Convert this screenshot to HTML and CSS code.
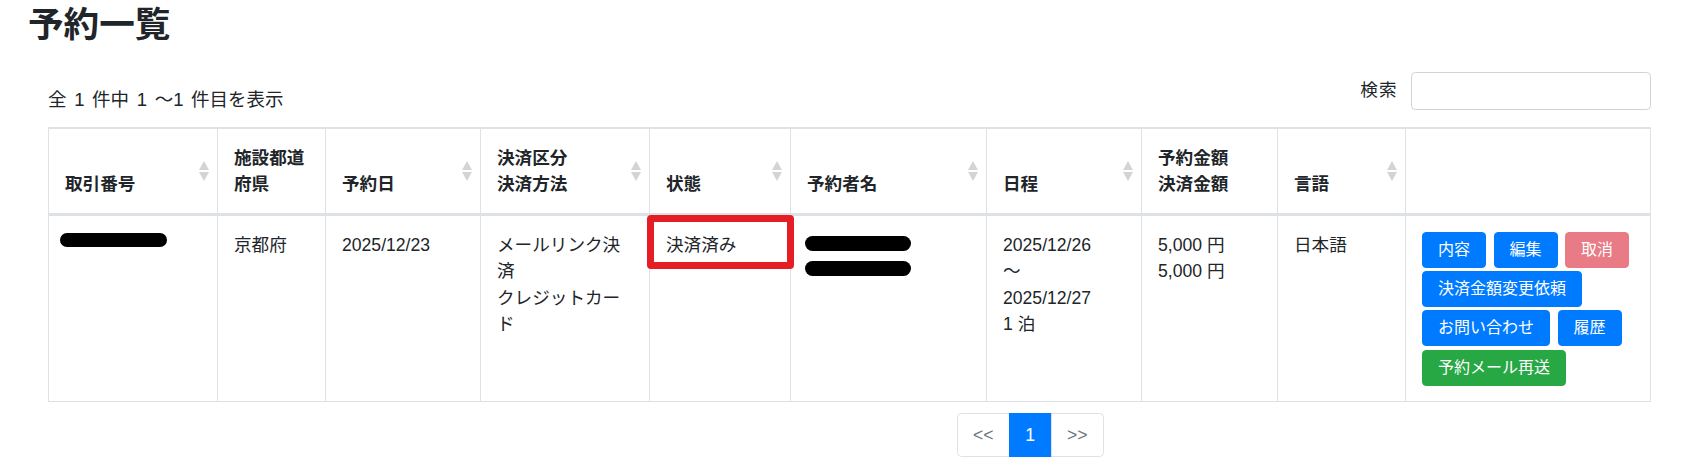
FILE: index.html
```html
<!DOCTYPE html>
<html lang="ja">
<head>
    <meta charset="UTF-8">
    <meta name="viewport" content="width=device-width, initial-scale=1.0">
    <title>予約一覧</title>
    <link rel="stylesheet" href="styles.css">
</head>
<body>
    <div class="page">
        <h2 class="title">予約一覧</h2>
        <div class="content">
            <div class="toolbar">
                <div class="info">全 1 件中 1 ～1 件目を表示</div>
                <label class="search">検索<input type="search" class="search-input"></label>
            </div>
            <table class="table">
                <thead>
                    <tr>
                        <th class="c1 sorting">取引番号<span class="sort-icon"><svg width="10" height="20" viewBox="0 0 10 20"><polygon points="5,0 10,9 0,9"/><polygon points="0,11 10,11 5,20"/></svg></span></th>
                        <th class="c2">施設都道府県</th>
                        <th class="c3 sorting">予約日<span class="sort-icon"><svg width="10" height="20" viewBox="0 0 10 20"><polygon points="5,0 10,9 0,9"/><polygon points="0,11 10,11 5,20"/></svg></span></th>
                        <th class="c4 sorting">決済区分<br>決済方法<span class="sort-icon"><svg width="10" height="20" viewBox="0 0 10 20"><polygon points="5,0 10,9 0,9"/><polygon points="0,11 10,11 5,20"/></svg></span></th>
                        <th class="c5 sorting">状態<span class="sort-icon"><svg width="10" height="20" viewBox="0 0 10 20"><polygon points="5,0 10,9 0,9"/><polygon points="0,11 10,11 5,20"/></svg></span></th>
                        <th class="c6 sorting">予約者名<span class="sort-icon"><svg width="10" height="20" viewBox="0 0 10 20"><polygon points="5,0 10,9 0,9"/><polygon points="0,11 10,11 5,20"/></svg></span></th>
                        <th class="c7 sorting">日程<span class="sort-icon"><svg width="10" height="20" viewBox="0 0 10 20"><polygon points="5,0 10,9 0,9"/><polygon points="0,11 10,11 5,20"/></svg></span></th>
                        <th class="c8">予約金額<br>決済金額</th>
                        <th class="c9 sorting">言語<span class="sort-icon"><svg width="10" height="20" viewBox="0 0 10 20"><polygon points="5,0 10,9 0,9"/><polygon points="0,11 10,11 5,20"/></svg></span></th>
                        <th class="c10"></th>
                    </tr>
                </thead>
                <tbody>
                    <tr>
                        <td><div class="redact redact-id"></div></td>
                        <td>京都府</td>
                        <td>2025/12/23</td>
                        <td>メールリンク決済<br>クレジットカード</td>
                        <td class="status">決済済み<div class="mark"></div></td>
                        <td>
                            <div class="redact redact-name"></div>
                            <div class="redact redact-name"></div>
                        </td>
                        <td>2025/12/26<br>～<br>2025/12/27<br>1 泊</td>
                        <td>5,000 円<br>5,000 円</td>
                        <td>日本語</td>
                        <td>
                            <div class="actions">
                                <button class="btn btn-primary">内容</button>
                                <button class="btn btn-primary">編集</button>
                                <button class="btn btn-danger" disabled>取消</button>
                                <button class="btn btn-primary">決済金額変更依頼</button>
                                <button class="btn btn-primary">お問い合わせ</button>
                                <button class="btn btn-primary">履歴</button>
                                <button class="btn btn-success">予約メール再送</button>
                            </div>
                        </td>
                    </tr>
                </tbody>
            </table>
            <ul class="pager">
                <li class="page-link disabled prev">&lt;&lt;</li>
                <li class="page-link active">1</li>
                <li class="page-link disabled next">&gt;&gt;</li>
            </ul>
        </div>
    </div>
</body>
</html>
```

FILE: styles.css
```css
body {
    margin: 0;
    font-family: "Liberation Sans", "Noto Sans CJK JP", sans-serif;
    font-size: 17.6px;
    line-height: 1.5;
    color: #212529;
    background: #fff;
}

.page {
    padding: 4px 0 0 28px;
}

.title {
    margin: 0 0 24.8px 0;
    font-size: 35.6px;
    font-weight: bold;
    line-height: 1.2;
}

.content {
    margin-left: 20px;
    width: 1603px;
}

.toolbar {
    display: flex;
    justify-content: space-between;
    align-items: flex-start;
    height: 42.2px;
}

.info {
    margin-top: 15.8px;
    font-size: 18.5px;
    line-height: 26.4px;
    word-spacing: 2.5px;
}

.search {
    display: flex;
    align-items: center;
    letter-spacing: 1px;
}

.search-input {
    margin-left: 13.5px;
    width: 240px;
    height: 38px;
    box-sizing: border-box;
    border: 1px solid #ced4da;
    border-radius: 4.4px;
    padding: 4px 8px;
    font-size: 15.4px;
}

.table {
    margin-top: 13.8px;
    width: 1603px;
    table-layout: fixed;
    border-collapse: separate;
    border-spacing: 0;
    border-top: 2px solid #dee2e6;
    border-left: 1px solid #dee2e6;
}

.table th,
.table td {
    box-sizing: border-box;
    padding: 15.5px 16px;
    border-right: 1px solid #dee2e6;
    border-bottom: 1px solid #dee2e6;
    text-align: left;
}

.table th {
    position: relative;
    vertical-align: bottom;
    font-weight: bold;
    border-bottom-width: 3px;
}

.table td {
    position: relative;
    vertical-align: top;
}

.c1 { width: 169px; }
.c2 { width: 108px; }
.c3 { width: 155px; }
.c4 { width: 169px; }
.c5 { width: 141px; }
.c6 { width: 196px; }
.c7 { width: 155px; }
.c8 { width: 136px; }
.c9 { width: 128px; }
.c10 { width: 245px; }

.sort-icon {
    position: absolute;
    right: 8px;
    top: 50%;
    transform: translateY(-50%);
    line-height: 0;
}

.sort-icon svg {
    fill: #d4d4d4;
}

.redact {
    background: #000;
    border-radius: 8px;
}

.redact-id {
    width: 107px;
    height: 14.5px;
    margin: 1px 0 0 -5px;
}

.redact-name {
    width: 106px;
    height: 15px;
    margin: 4.4px 0 0 -2px;
}

.redact-name + .redact-name {
    margin-top: 10px;
}

.mark {
    position: absolute;
    left: -3.3px;
    top: -1.1px;
    width: 147.3px;
    height: 54.3px;
    box-sizing: border-box;
    border: 7.5px solid #e51d24;
    border-radius: 4px;
}

.actions {
    display: flex;
    flex-wrap: wrap;
    gap: 3.3px 7.5px;
}

.btn {
    height: 36px;
    box-sizing: border-box;
    padding: 0 15px;
    border: 1px solid transparent;
    border-radius: 4px;
    font-family: inherit;
    font-size: 16px;
    line-height: 34px;
    color: #fff;
    cursor: pointer;
}

.btn-primary {
    background: #007bff;
    border-color: #007bff;
}

.btn-danger {
    background: #dc3545;
    border-color: #dc3545;
    opacity: .65;
}

.btn-success {
    background: #28a745;
    border-color: #28a745;
}

.pager {
    display: flex;
    list-style: none;
    margin: 10.4px 0 0 908.7px;
    padding: 0;
}

.page-link {
    display: flex;
    align-items: center;
    justify-content: center;
    height: 44.7px;
    box-sizing: border-box;
    border: 1px solid #dee2e6;
    margin-left: -1px;
    color: #6c757d;
    background: #fff;
}

.prev {
    width: 53px;
    margin-left: 0;
    border-radius: 4.4px 0 0 4.4px;
}

.next {
    width: 53.4px;
    border-radius: 0 4.4px 4.4px 0;
}

.page-link.active {
    width: 43px;
    color: #fff;
    background: #007bff;
    border-color: #007bff;
}
```
